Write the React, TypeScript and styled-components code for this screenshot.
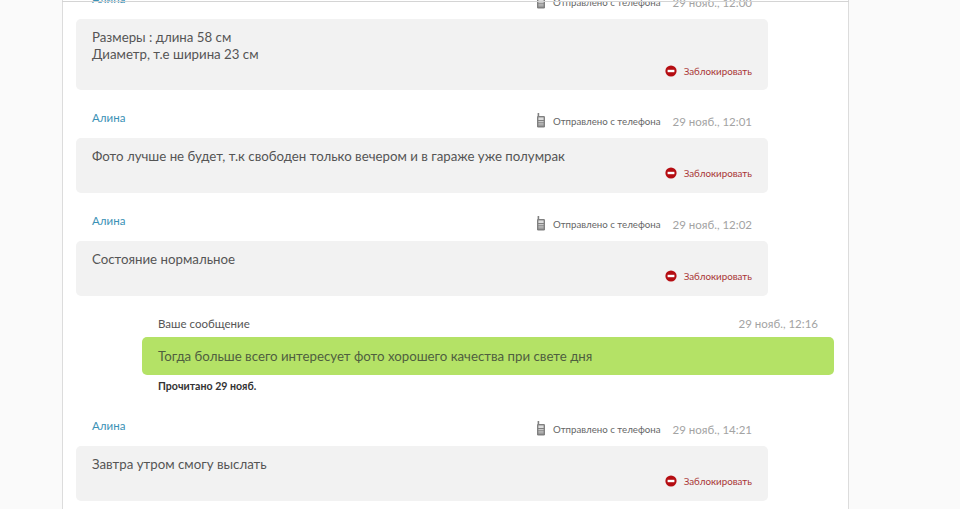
import React from 'react';
import styled, { createGlobalStyle } from 'styled-components';

const GlobalStyle = createGlobalStyle`
  html, body {
    margin: 0;
    padding: 0;
    background: #fafafa;
    font-family: Lato, "Open Sans", "Noto Sans", sans-serif;
  }
`;

const Page = styled.div`
  position: relative;
  width: 960px;
  height: 509px;
  overflow: hidden;
  background: #fafafa;
`;

const Panel = styled.div`
  box-sizing: border-box;
  display: flex;
  flex-direction: column;
  width: 787px;
  height: 560px;
  margin: -9px 0 0 62px;
  padding: 0 13px;
  background: #fff;
  border-left: 1px solid #dcdcdc;
  border-right: 1px solid #dcdcdc;
`;

const TopLine = styled.div`
  position: absolute;
  top: 1px;
  left: 62px;
  width: 787px;
  height: 1px;
  background: #d4d4d4;
`;

const Incoming = styled.div`
  flex: none;
  width: 692px;
  margin-bottom: 20px;
`;

const Meta = styled.div`
  display: flex;
  align-items: center;
  justify-content: space-between;
  height: 20px;
  margin-bottom: 8px;
  padding: 0 16px;
`;

const Author = styled.span`
  font-size: 11.5px;
  color: #3a91b5;
  margin-top: -5px;
`;

const MetaRight = styled.div`
  display: flex;
  align-items: center;
  margin-top: 2px;
`;

const PhoneIcon = styled.svg`
  width: 10px;
  height: 15px;
  margin-right: 7px;
  margin-top: -2px;
`;

const Sent = styled.span`
  font-size: 9.7px;
  color: #666;
`;

const Time = styled.span`
  font-size: 11.5px;
  color: #a3a3a3;
  margin-left: 12px;
`;

const Bubble = styled.div`
  box-sizing: border-box;
  padding: 10px 16px 6px;
  background: #f2f2f2;
  border-radius: 5px;
  font-size: 13.27px;
  line-height: 17px;
  color: #555;
`;

const Actions = styled.div`
  display: flex;
  align-items: center;
  justify-content: flex-end;
  height: 14px;
  margin-top: 1px;
`;

const BlockIcon = styled.svg`
  width: 12px;
  height: 12px;
  margin-right: 7px;
`;

const BlockLink = styled.span`
  font-size: 9.8px;
  color: #a93535;
`;

const Outgoing = styled.div`
  flex: none;
  width: 692px;
  margin: 0 0 26px 66px;
`;

const OutMeta = styled.div`
  display: flex;
  align-items: center;
  justify-content: space-between;
  height: 14px;
  padding: 0 16px;
  margin-bottom: 7px;
`;

const You = styled.span`
  font-size: 11.5px;
  color: #555;
`;

const GreenBubble = styled.div`
  box-sizing: border-box;
  height: 38px;
  padding: 0 16px;
  display: flex;
  align-items: center;
  background: #b4e266;
  border-radius: 5px;
  font-size: 13.27px;
  color: #4f5f3f;
`;

const ReadNote = styled.div`
  margin: 5px 0 0 16px;
  height: 12px;
  line-height: 12px;
  font-size: 10.6px;
  font-weight: 700;
  color: #333;
`;

const Phone = () => (
  <PhoneIcon viewBox="0 0 10 15">
    <rect x="1.6" y="0" width="1.6" height="4" fill="#808080" />
    <rect x="1" y="3" width="8" height="11.5" rx="1.2" fill="#808080" />
    <rect x="2.4" y="4.4" width="5.2" height="2.6" fill="#ddd" />
    <path d="M2.4 8.5h5.2M2.4 10.2h5.2M2.4 11.9h5.2" stroke="#ddd" strokeWidth="0.8" />
  </PhoneIcon>
);

const Block = () => (
  <Actions>
    <BlockIcon viewBox="0 0 12 12">
      <circle cx="6" cy="6" r="5.6" fill="#b50d12" />
      <rect x="2.6" y="4.8" width="6.8" height="2.4" fill="#fff" />
    </BlockIcon>
    <BlockLink>Заблокировать</BlockLink>
  </Actions>
);

type MessageProps = { time: string; lines: string[]; height: number };

const Message = ({ time, lines, height }: MessageProps) => (
  <Incoming>
    <Meta>
      <Author>Алина</Author>
      <MetaRight>
        <Phone />
        <Sent>Отправлено с телефона</Sent>
        <Time>{time}</Time>
      </MetaRight>
    </Meta>
    <Bubble style={{ height }}>
      {lines.map((l) => (
        <div key={l}>{l}</div>
      ))}
      <Block />
    </Bubble>
  </Incoming>
);

export default function App() {
  return (
    <Page>
      <GlobalStyle />
      <Panel>
        <Message time="29 нояб., 12:00" lines={['Размеры : длина 58 см', 'Диаметр, т.е ширина 23 см']} height={71} />
        <Message time="29 нояб., 12:01" lines={['Фото лучше не будет, т.к свободен только вечером и в гараже уже полумрак']} height={55} />
        <Message time="29 нояб., 12:02" lines={['Состояние нормальное']} height={55} />
        <Outgoing>
          <OutMeta>
            <You>Ваше сообщение</You>
            <Time>29 нояб., 12:16</Time>
          </OutMeta>
          <GreenBubble>Тогда больше всего интересует фото хорошего качества при свете дня</GreenBubble>
          <ReadNote>Прочитано 29 нояб.</ReadNote>
        </Outgoing>
        <Message time="29 нояб., 14:21" lines={['Завтра утром смогу выслать']} height={55} />
      </Panel>
      <TopLine />
    </Page>
  );
}
